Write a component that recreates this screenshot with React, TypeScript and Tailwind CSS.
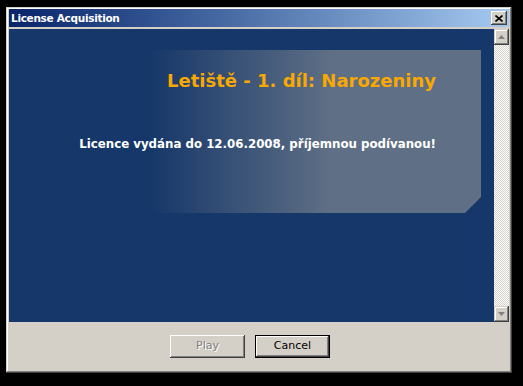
import React from "react";

const ui = { fontFamily: '"DejaVu Sans", Tahoma, Verdana, sans-serif' };

function Arrow({ up }: { up?: boolean }) {
  return (
    <svg width="7" height="4" viewBox="0 0 7 4" className={up ? "" : "rotate-180"}>
      <polygon points="3.5,0 7,4 0,4" fill="#808080" />
    </svg>
  );
}

function ScrollButton({ up }: { up?: boolean }) {
  return (
    <div className="flex h-[16px] w-[15px] items-center justify-center bg-[#d4d0c8] shadow-[inset_-1px_-1px_#404040,inset_1px_1px_#d4d0c8,inset_-2px_-2px_#808080,inset_2px_2px_#ffffff]">
      <Arrow up={up} />
    </div>
  );
}

export default function App() {
  return (
    <div className="h-[386px] w-[523px] bg-black pl-[6px] pt-[7px]" style={ui}>
      <div className="flex h-[366px] w-[506px] flex-col bg-[#d4d0c8] p-[3px] pt-[2px] shadow-[inset_-1px_-1px_#404040,inset_1px_1px_#d4d0c8,inset_-2px_-2px_#808080,inset_2px_2px_#ffffff]">
        {/* title bar */}
        <div className="flex h-[18px] items-center justify-between bg-gradient-to-r from-[#0a246a] to-[#a6caf0] pl-[2px] pr-[2px]">
          <span className="text-[10.5px] font-bold leading-none tracking-[-0.3px] text-white">License Acquisition</span>
          <div className="flex h-[14px] w-[16px] items-center justify-center bg-[#d4d0c8] shadow-[inset_-1px_-1px_#404040,inset_1px_1px_#ffffff,inset_-2px_-2px_#808080]">
            <svg width="8" height="7" viewBox="0 0 8 7">
              <path d="M0.5 0.5 L7.5 6.5 M7.5 0.5 L0.5 6.5" stroke="#000" strokeWidth="1.6" />
            </svg>
          </div>
        </div>

        <div className="mt-[2px] flex h-[293px]">
          <div className="flex-1 bg-[#163769] pl-[31px] pt-[21px]">
            <div className="flex h-[163px] w-[441px] flex-col items-end bg-gradient-to-r from-[#163769] from-25% to-[#5f6f85] to-66% pr-[45px] [clip-path:polygon(0_0,100%_0,100%_calc(100%_-_16px),calc(100%_-_16px)_100%,0_100%)]">
              <h1 className="mt-[20px] text-[18px] font-bold leading-[22px] text-[#f8a800]">Letiště - 1. díl: Narozeniny</h1>
              <p className="mt-[45px] text-[11.8px] font-bold leading-[14px] text-white">
                Licence vydána do 12.06.2008, příjemnou podívanou!
              </p>
            </div>
          </div>
          <div className="flex w-[15px] flex-col">
            <ScrollButton up />
            <div className="flex-1 bg-[repeating-conic-gradient(#d4d0c8_0_25%,#ffffff_0_50%)] bg-[length:2px_2px]" />
            <ScrollButton />
          </div>
        </div>

        <div className="flex gap-[10px] pl-[161px] pt-[13px]">
          <button className="h-[23px] w-[75px] bg-[#d4d0c8] text-[11px] text-[#808080] shadow-[inset_-1px_-1px_#404040,inset_1px_1px_#ffffff,inset_-2px_-2px_#808080] [text-shadow:1px_1px_#ffffff]">
            Play
          </button>
          <button className="h-[23px] w-[75px] bg-[#d4d0c8] text-[11px] text-black shadow-[inset_-1px_-1px_#000,inset_1px_1px_#000,inset_-2px_-2px_#404040,inset_2px_2px_#ffffff,inset_-3px_-3px_#808080]">
            Cancel
          </button>
        </div>
      </div>
    </div>
  );
}
